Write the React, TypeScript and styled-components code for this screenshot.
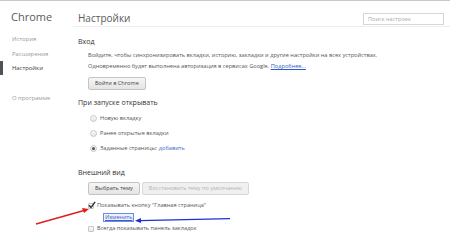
import React from 'react';
import styled, { createGlobalStyle } from 'styled-components';

const GlobalStyle = createGlobalStyle`
  html, body {
    margin: 0;
    padding: 0;
    background: #fff;
  }
  body {
    font-family: "Open Sans", "Liberation Sans", sans-serif;
  }
`

const Page = styled.div`
  position: relative;
  width: 450px;
  height: 248px;
  overflow: hidden;
  border-top: 1px solid #c9c9c9;
  box-sizing: border-box;
  display: flex;
  background: #fff;
`

const Sidebar = styled.nav`
  width: 73px;
  flex-shrink: 0;
  padding-top: 9px;
  display: flex;
  flex-direction: column;
`

const Brand = styled.div`
  font-size: 11px;
  line-height: 13px;
  color: #5a5a5a;
  padding-left: 11px;
  margin-bottom: 9px;
`

const NavItem = styled.div<{ $active?: boolean; $gap?: number }>`
  position: relative;
  font-size: 5.9px;
  line-height: 14.5px;
  padding-left: 12px;
  margin-top: ${p => p.$gap || 0}px;
  color: ${p => (p.$active ? '#3c3c3c' : '#9a9a9a')};

  &::before {
    content: '';
    display: ${p => (p.$active ? 'block' : 'none')};
    position: absolute;
    left: 0;
    top: 0;
    width: 3px;
    height: 14px;
    background: #4e5358;
  }
`

const Main = styled.main`
  flex: 1;
  display: flex;
  flex-direction: column;
`

const Header = styled.header`
  height: 26px;
  padding-top: 1px;
  box-sizing: border-box;
  display: flex;
  align-items: center;
  justify-content: space-between;
  padding-right: 6px;
  padding-left: 5px;
  border-bottom: 1px solid #eeeeee;
`

const Title = styled.h1`
  margin: 0;
  font-size: 10px;
  font-weight: 400;
  color: #5a5a5a;
  padding-top: 7px;
`

const Search = styled.input`
  width: 81px;
  height: 12px;
  box-sizing: border-box;
  border: 1px solid #d6d6d6;
  font-family: inherit;
  font-size: 5.6px;
  padding: 0 4px;
  margin-top: 9px;
  color: #999;
  outline: none;

  &::placeholder {
    color: #a9a9a9;
  }
`

const Section = styled.section<{ $top: number }>`
  padding-left: 5px;
  margin-top: ${p => p.$top}px;
`

const SectionTitle = styled.h3`
  margin: 0;
  font-size: 7px;
  line-height: 10px;
  font-weight: 400;
  color: #333;
`

const Body = styled.div<{ $top: number }>`
  padding-left: 10px;
  margin-top: ${p => p.$top}px;
`

const Text = styled.div`
  font-size: 5.65px;
  line-height: 11px;
  color: #555;
  white-space: nowrap;
`

const Link = styled.span`
  color: #2b5cc8;
  text-decoration: underline;
`

const InlineLink = styled.span`
  color: #3b67c8;
`

const Buttons = styled.div<{ $top: number }>`
  display: flex;
  gap: 2px;
  margin-top: ${p => p.$top}px;
`

const Button = styled.button<{ $disabled?: boolean }>`
  height: 13px;
  padding: 0 6px;
  font-family: inherit;
  font-size: 5.6px;
  line-height: 11px;
  border: 1px solid #c4c4c4;
  border-radius: 2px;
  color: ${p => (p.$disabled ? '#b3b3b3' : '#444')};
  border-color: ${p => (p.$disabled ? '#d8d8d8' : '#c4c4c4')};
  background: ${p => (p.$disabled ? '#f0f0f0' : 'linear-gradient(#f6f6f6, #e4e4e4)')};
`

const RadioRow = styled.div`
  display: flex;
  align-items: center;
  height: 15px;
  gap: 3px;
  padding-left: 2px;
`

const Radio = styled.span<{ $checked?: boolean }>`
  width: 7px;
  height: 7px;
  box-sizing: border-box;
  border-radius: 50%;
  border: 1px solid #c8c8c8;
  background: linear-gradient(#fafafa, #e6e6e6);
  display: flex;
  align-items: center;
  justify-content: center;

  &::after {
    content: '';
    display: ${p => (p.$checked ? 'block' : 'none')};
    width: 3px;
    height: 3px;
    border-radius: 50%;
    background: #555;
  }
`

const CheckRow = styled.div`
  display: flex;
  align-items: center;
  height: 11.5px;
  gap: 3px;
`

const Check = styled.span`
  position: relative;
  width: 6px;
  height: 6px;
  border: 1px solid #c6c6c6;
  border-radius: 1px;
  background: linear-gradient(#fafafa, #e8e8e8);
  box-sizing: border-box;
  flex-shrink: 0;
`

const Tick = styled.svg`
  position: absolute;
  left: -1px;
  top: -3px;
`

const SubRow = styled.div`
  height: 11.5px;
  display: flex;
  align-items: center;
  padding-left: 15px;
`

const Boxed = styled.span`
  font-size: 5.65px;
  line-height: 7px;
  padding: 0 1px;
  color: #3b5fc4;
  text-decoration: underline;
  border: 1px solid #6d8be4;
  background: #eef2fe;
`

const Overlay = styled.svg`
  position: absolute;
  left: 0;
  top: 0;
  pointer-events: none;
`

export default function App() {
  return (
    <>
      <GlobalStyle />
      <Page>
        <Sidebar>
          <Brand>Chrome</Brand>
          <NavItem>История</NavItem>
          <NavItem>Расширения</NavItem>
          <NavItem $active>Настройки</NavItem>
          <NavItem $gap={15}>О программе</NavItem>
        </Sidebar>
        <Main>
          <Header>
            <Title>Настройки</Title>
            <Search placeholder="Поиск настроек" />
          </Header>

          <Section $top={10}>
            <SectionTitle>Вход</SectionTitle>
            <Body $top={3}>
              <Text>Войдите, чтобы синхронизировать вкладки, историю, закладки и другие настройки на всех устройствах.</Text>
              <Text>
                Одновременно будет выполнена авторизация в сервисах Google. <Link>Подробнее...</Link>
              </Text>
              <Buttons $top={5}>
                <Button>Войти в Chrome</Button>
              </Buttons>
            </Body>
          </Section>

          <Section $top={8}>
            <SectionTitle>При запуске открывать</SectionTitle>
            <Body $top={3}>
              <RadioRow>
                <Radio />
                <Text>Новую вкладку</Text>
              </RadioRow>
              <RadioRow>
                <Radio />
                <Text>Ранее открытые вкладки</Text>
              </RadioRow>
              <RadioRow>
                <Radio $checked />
                <Text>
                  Заданные страницы: <InlineLink>добавить</InlineLink>
                </Text>
              </RadioRow>
            </Body>
          </Section>

          <Section $top={12}>
            <SectionTitle>Внешний вид</SectionTitle>
            <Body $top={4}>
              <Buttons $top={0}>
                <Button>Выбрать тему</Button>
                <Button $disabled>Восстановить тему по умолчанию</Button>
              </Buttons>
              <div style={{ marginTop: 5 }}>
                <CheckRow>
                  <Check>
                    <Tick width="8" height="8" viewBox="0 0 8 8">
                      <path d="M1 4.2 L3 6.5 L7.2 0.8" fill="none" stroke="#333" strokeWidth="1.4" />
                    </Tick>
                  </Check>
                  <Text>Показывать кнопку "Главная страница"</Text>
                </CheckRow>
                <SubRow>
                  <Boxed>Изменить</Boxed>
                </SubRow>
                <CheckRow>
                  <Check />
                  <Text>Всегда показывать панель закладок</Text>
                </CheckRow>
              </div>
            </Body>
          </Section>
        </Main>

        <Overlay width="450" height="248" viewBox="0 0 450 248">
          <line x1="36" y1="223" x2="84" y2="209.5" stroke="#e21b1b" strokeWidth="1.3" />
          <polygon points="89,208 82,207 84,212" fill="#e21b1b" />
          <line x1="140" y1="219.6" x2="230" y2="217.6" stroke="#1c2fd6" strokeWidth="1.3" />
          <polygon points="135,219.7 141,217 141,222" fill="#1c2fd6" />
        </Overlay>
      </Page>
    </>
  );
}
